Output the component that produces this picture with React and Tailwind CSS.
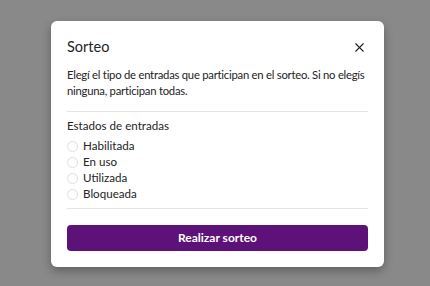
import { X } from 'lucide-react'

const estados = ['Habilitada', 'En uso', 'Utilizada', 'Bloqueada']

export default function App() {
  return (
    <div className="h-[286px] w-[430px] bg-[#898989] pt-[21px] pl-[51px] font-['Lato',sans-serif] text-[#242424]">
      <div className="w-[333px] h-[246px] rounded-md bg-white px-4 pt-4 pb-4 shadow-[0_4px_10px_rgba(0,0,0,0.3)] flex flex-col">
        <div className="flex items-center justify-between h-5">
          <h2 className="text-[14.5px] leading-5">Sorteo</h2>
          <button className="mr-[1px] text-[#222]">
            <X size={15} strokeWidth={1.7} />
          </button>
        </div>
        <p className="mt-[10px] text-[11.3px] leading-4 tracking-[-0.25px] whitespace-nowrap">
          Elegí el tipo de entradas que participan en el sorteo. Si no elegís
          <br />
          ninguna, participan todas.
        </p>
        <div className="mt-3 border-t border-[#e3e3e3]" />
        <div className="mt-[6px] text-[11.6px] leading-4">Estados de entradas</div>
        <div className="mt-1 flex flex-col">
          {estados.map((e) => (
            <label key={e} className="flex items-center h-4 gap-[5px] text-[11.6px]">
              <span className="w-[11px] h-[11px] rounded-full border border-[#dedede]" />
              {e}
            </label>
          ))}
        </div>
        <div className="mt-[6px] border-t border-[#e3e3e3]" />
        <button className="mt-4 h-[26px] w-full rounded-[4px] bg-[#5c1278] text-white text-[12px] font-bold">
          Realizar sorteo
        </button>
      </div>
    </div>
  )
}
